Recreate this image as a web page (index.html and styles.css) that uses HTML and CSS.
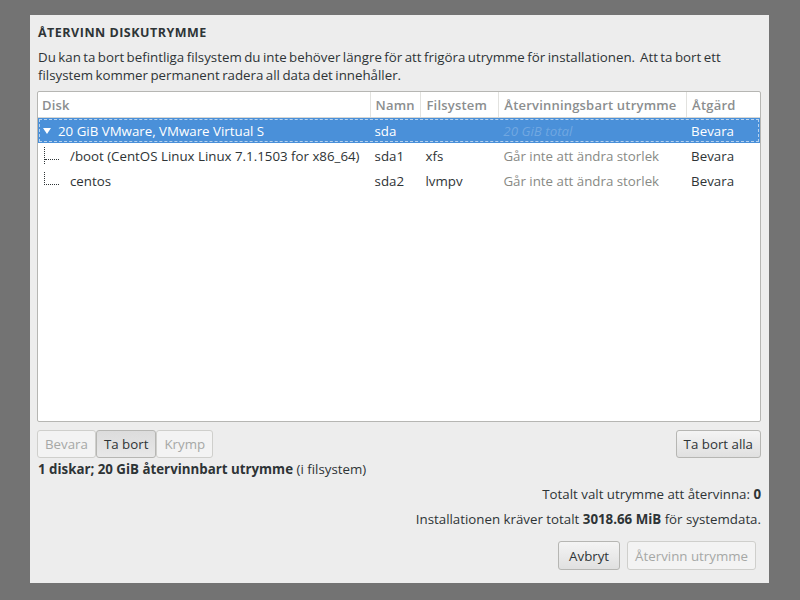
FILE: index.html
```html
<!DOCTYPE html>
<html lang="sv">
<head>
<meta charset="utf-8">
<title>Återvinn diskutrymme</title>
<link rel="stylesheet" href="styles.css">
</head>
<body>
<div class="dialog">
  <h1 class="title">ÅTERVINN DISKUTRYMME</h1>
  <p class="intro">Du kan ta bort befintliga filsystem du inte behöver längre för att frigöra utrymme för installationen.&nbsp; Att ta bort ett filsystem kommer permanent radera all data det innehåller.</p>
  <div class="table">
    <div class="row head">
      <div class="c disk">Disk</div>
      <div class="c name">Namn</div>
      <div class="c fs">Filsystem</div>
      <div class="c recl">Återvinningsbart utrymme</div>
      <div class="c act">Åtgärd</div>
    </div>
    <div class="row sel">
      <div class="c disk"><span class="tri"></span>20 GiB VMware, VMware Virtual S</div>
      <div class="c name">sda</div>
      <div class="c fs"></div>
      <div class="c recl faint">20 GiB total</div>
      <div class="c act">Bevara</div>
    </div>
    <div class="row">
      <div class="c disk child"><span class="tree mid"></span>/boot (CentOS Linux Linux 7.1.1503 for x86_64)</div>
      <div class="c name">sda1</div>
      <div class="c fs">xfs</div>
      <div class="c recl dim">Går inte att ändra storlek</div>
      <div class="c act">Bevara</div>
    </div>
    <div class="row">
      <div class="c disk child"><span class="tree last"></span>centos</div>
      <div class="c name">sda2</div>
      <div class="c fs">lvmpv</div>
      <div class="c recl dim">Går inte att ändra storlek</div>
      <div class="c act">Bevara</div>
    </div>
  </div>
  <div class="actions">
    <div class="group">
      <button class="btn" disabled>Bevara</button>
      <button class="btn pressed">Ta bort</button>
      <button class="btn" disabled>Krymp</button>
    </div>
    <button class="btn">Ta bort alla</button>
  </div>
  <p class="summary"><b>1 diskar; 20 GiB återvinnbart utrymme</b> (i filsystem)</p>
  <p class="total">Totalt valt utrymme att återvinna: <b>0</b></p>
  <p class="req">Installationen kräver totalt <b>3018.66 MiB</b> för systemdata.</p>
  <div class="footer">
    <button class="btn big">Avbryt</button>
    <button class="btn big wide" disabled>Återvinn utrymme</button>
  </div>
</div>
</body>
</html>
```

FILE: styles.css
```css
html, body {
  margin: 0;
  padding: 0;
  background: #737373;
  height: 100%;
}
body {
  font-family: "Open Sans", "DejaVu Sans", sans-serif;
  font-size: 13.3px;
  color: #2e3436;
}
.dialog {
  box-sizing: border-box;
  width: 739px;
  height: 568px;
  margin: 15px 0 0 30px;
  background: #ededed;
  padding: 8px 8px 0 7px;
  display: flex;
  flex-direction: column;
}
.title {
  margin: 2px 0 0 1px;
  font-size: 12.5px;
  font-weight: 700;
  letter-spacing: 0.5px;
  line-height: 16px;
}
.intro {
  margin: 7px 0 0 1px;
  line-height: 18px;
  padding-right: 20px;
  word-spacing: -1px;
}
.table {
  margin-top: 7px;
  height: 331px;
  background: #fff;
  border: 1px solid #b6b6b3;
  border-radius: 2px;
  box-sizing: border-box;
}
.row {
  display: flex;
  height: 25px;
  align-items: center;
}
.row.head {
  height: 25px;
  border-bottom: 1px solid #d7d7d3;
  color: #8b8e8f;
  font-weight: 600;
  font-size: 13px;
  letter-spacing: 0.2px;
}
.head .c {
  border-left: 1px solid #e2e2df;
  height: 25px;
  line-height: 26px;
}
.head .c.disk { border-left: none; }
.c {
  box-sizing: border-box;
  padding-left: 5px;
  white-space: nowrap;
  overflow: hidden;
}
.disk { width: 332px; padding-left: 4px; display: flex; align-items: center; }
.name { width: 51px; }
.fs { width: 78px; }
.recl { width: 188px; }
.act { width: 74px; }
.row.sel {
  background: #4a90d9;
  color: #fff;
  outline: 1px dashed rgba(255,255,255,0.6);
  outline-offset: -2px;
}
.tri {
  width: 0;
  height: 0;
  border-left: 4px solid transparent;
  border-right: 4px solid transparent;
  border-top: 6px solid #fff;
  margin: 1px 7px 0 1px;
}
.faint { color: rgba(255,255,255,0.22); font-style: italic; }
.dim { color: #888a85; }
.child { position: relative; padding-left: 32px; }
.tree {
  position: absolute;
  left: 6px;
  width: 14px;
  border-left: 1px dotted #2e3436;
}
.tree.mid {
  top: 0;
  height: 25px;
}
.tree.mid::after {
  content: "";
  position: absolute;
  left: 0;
  top: 12px;
  width: 14px;
  border-top: 1px dotted #2e3436;
}
.tree.last {
  top: 0;
  height: 12px;
  border-bottom: 1px dotted #2e3436;
}
.actions {
  display: flex;
  justify-content: space-between;
  margin-top: 8px;
}
.group { display: flex; gap: 0; }
.btn {
  font: inherit;
  color: #2e3436;
  height: 28px;
  padding: 0 7px;
  border: 1px solid #b6b6b3;
  border-radius: 3px;
  background: linear-gradient(#f4f4f4, #e0e0e0);
}
.group .btn { padding: 0 7px; }
.btn:disabled {
  color: #a6a8a6;
  background: #f3f3f3;
  border-color: #cfcfcc;
}
.btn.pressed { background: linear-gradient(#dcdcdc, #e8e8e8); }
.btn.big { height: 29px; padding: 0 10px; }
.btn.big.wide { padding: 0 7px; }
.summary { margin: 3px 0 0 1px; line-height: 16px; }
.total { margin: 8px 0 0; text-align: right; line-height: 18px; }
.req { margin: 7px 0 0; text-align: right; line-height: 18px; }
.footer {
  display: flex;
  justify-content: flex-end;
  gap: 7px;
  margin: 13px 5px 0 0;
}
```
